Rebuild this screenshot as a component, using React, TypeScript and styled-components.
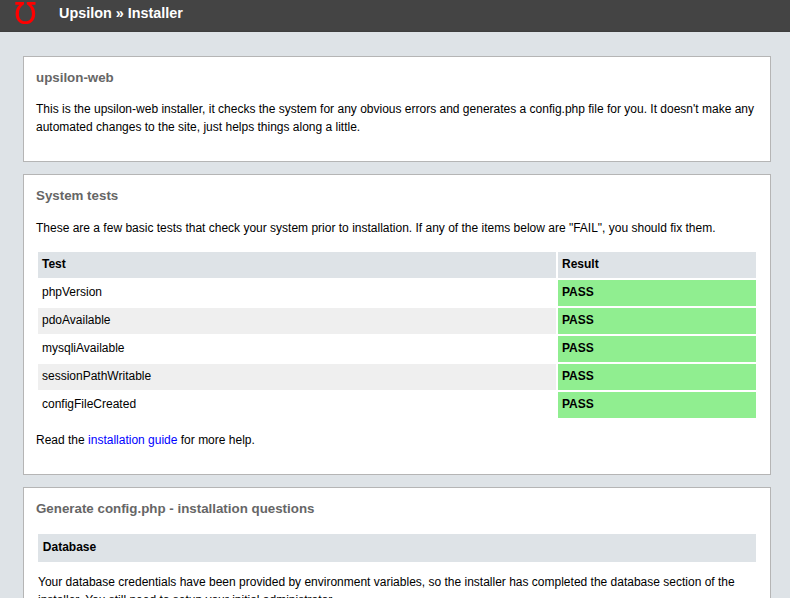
import React from "react";
import styled, { createGlobalStyle } from "styled-components";

const GlobalStyle = createGlobalStyle`
  html, body { margin: 0; padding: 0; }
  html { height: 100%; overflow: hidden; }
  body {
    height: 100%;
    overflow: hidden;
    background: #dee3e7;
    color: #000;
    font: 12px/18px "Liberation Sans", Arial, sans-serif;
  }
`;

const Header = styled.header`
  display: flex;
  align-items: flex-start;
  box-sizing: border-box;
  height: 32px;
  padding-left: 15px;
  background: linear-gradient(#444 0, #444 30px, #3c3c3c 32px);
`;

const Logo = styled.svg`
  display: block;
  flex: none;
  width: 21px;
  height: 26px;
`;

const SiteTitle = styled.h1`
  margin: 4px 0 0 23px;
  color: #fff;
  font-size: 14.4px;
  line-height: 18px;
  font-weight: bold;
`;

const Content = styled.main`
  display: flex;
  flex-direction: column;
  gap: 12px;
  padding: 24px 19px 0 23px;
`;

const Card = styled.section<{ $height: number }>`
  box-sizing: border-box;
  flex: none;
  height: ${(p) => p.$height}px;
  padding: 12px 12px 0;
  border: 1px solid #b5b5b5;
  background: #fff;
`;

const CardTitle = styled.h2`
  margin: 0;
  color: #666;
  font-size: 13.33px;
  line-height: 18px;
  font-weight: bold;
`;

const Text = styled.p<{ $top: number }>`
  margin: ${(p) => p.$top}px 0 0;
`;

const Link = styled.a`
  color: #00f;
  text-decoration: none;
`;

const Results = styled.div`
  display: flex;
  flex-direction: column;
  gap: 2px;
  margin: 15px 2px 0;
`;

const Row = styled.div`
  display: grid;
  grid-template-columns: 518px 1fr;
  gap: 2px;
`;

const Cell = styled.div<{ $bg?: string; $bold?: boolean }>`
  box-sizing: border-box;
  height: 26px;
  padding: 3px 4px 5px;
  background: ${(p) => p.$bg ?? "#fff"};
  font-weight: ${(p) => (p.$bold ? "bold" : "normal")};
`;

const Form = styled.div`
  margin: 16px 2px 0;
`;

const FormHeading = styled.h3`
  box-sizing: border-box;
  height: 28px;
  margin: 0;
  padding: 4px 4.8px 0;
  background: #dee3e7;
  font-size: 12px;
  line-height: 18px;
`;

const tests = [
  "phpVersion",
  "pdoAvailable",
  "mysqliAvailable",
  "sessionPathWritable",
  "configFileCreated",
];

export default function App() {
  return (
    <>
      <GlobalStyle />
      <Header>
        <Logo viewBox="0 0 21 26" aria-hidden="true">
          <path
            d="M0.3 2H9V4.3C5.8 6.2 3.9 9.4 3.9 13.7C3.9 18.5 6.2 21.3 10.4 21.3S16.9 18.5 16.9 13.7C16.9 9.4 15 6.2 11.8 4.3V2H20.5V4.8H16.3C18.8 6.8 20.2 9.9 20.2 13.7C20.2 20 16.4 24.1 10.4 24.1S0.6 20 0.6 13.7C0.6 9.9 2 6.8 4.5 4.8H0.3Z"
            fill="#f00"
          />
        </Logo>
        <SiteTitle>Upsilon » Installer</SiteTitle>
      </Header>
      <Content>
        <Card $height={106}>
          <CardTitle>upsilon-web</CardTitle>
          <Text $top={13}>
            This is the upsilon-web installer, it checks the system for any
            obvious errors and generates a config.php file for you. It doesn't
            make any automated changes to the site, just helps things along a
            little.
          </Text>
        </Card>
        <Card $height={301}>
          <CardTitle>System tests</CardTitle>
          <Text $top={14}>
            These are a few basic tests that check your system prior to
            installation. If any of the items below are "FAIL", you should fix
            them.
          </Text>
          <Results>
            <Row>
              <Cell $bg="#dee3e7" $bold>Test</Cell>
              <Cell $bg="#dee3e7" $bold>Result</Cell>
            </Row>
            {tests.map((name, i) => (
              <Row key={name}>
                <Cell $bg={i % 2 ? "#efefef" : "#fff"}>{name}</Cell>
                <Cell $bg="#90ee90" $bold>PASS</Cell>
              </Row>
            ))}
          </Results>
          <Text $top={13}>
            Read the <Link href="#">installation guide</Link> for more help.
          </Text>
        </Card>
        <Card $height={200}>
          <CardTitle>Generate config.php - installation questions</CardTitle>
          <Form>
            <FormHeading>Database</FormHeading>
            <Text $top={11}>
              Your database credentials have been provided by environment
              variables, so the installer has completed the database section of
              the installer. You still need to setup your initial administrator.
            </Text>
          </Form>
        </Card>
      </Content>
    </>
  );
}
